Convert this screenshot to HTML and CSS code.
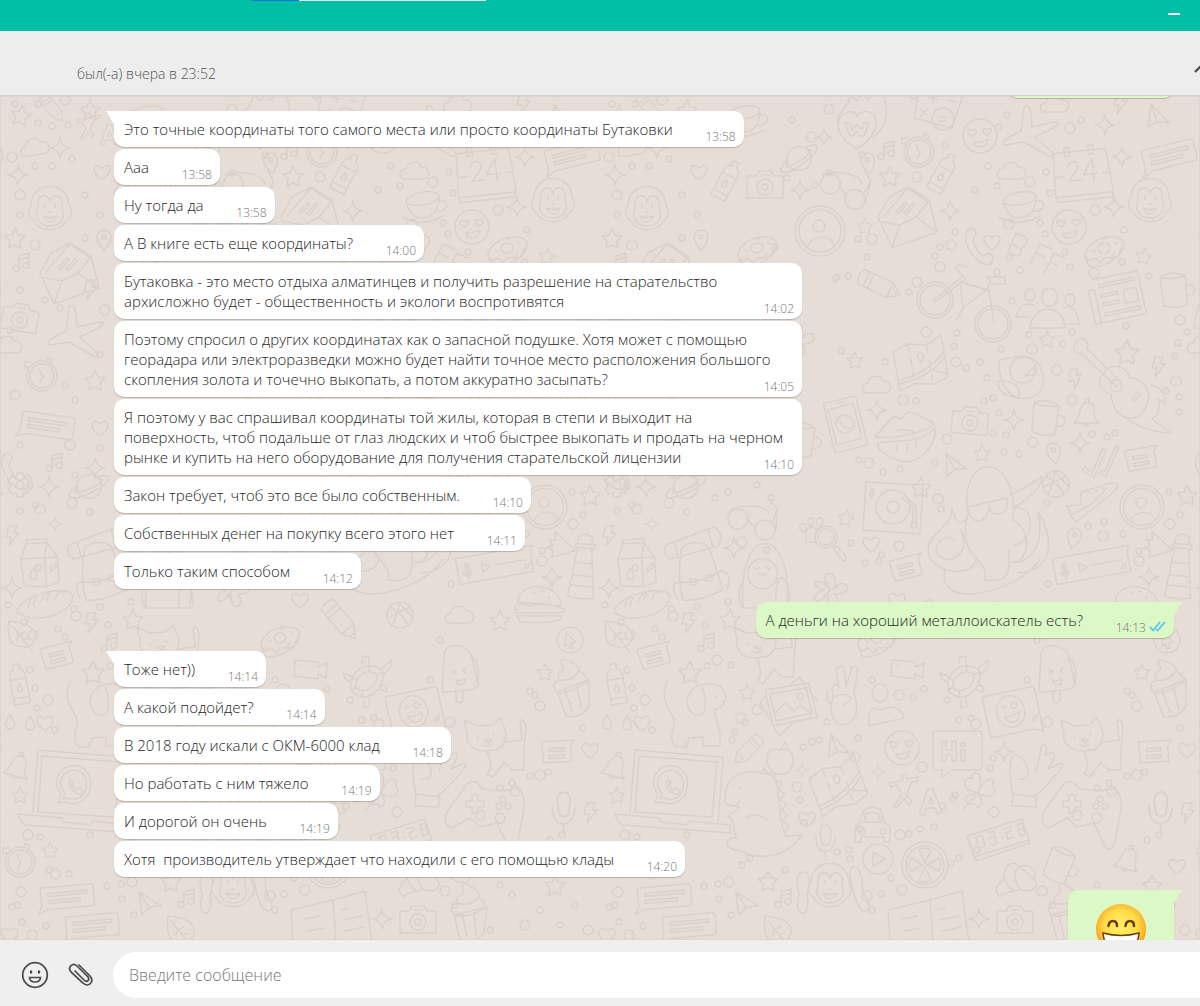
FILE: index.html
```
<!DOCTYPE html>
<html lang="ru">
<head>
    <meta charset="UTF-8">
    <meta name="viewport" content="width=device-width, initial-scale=1.0">
    <title>Чат</title>
    <link rel="stylesheet" href="styles.css">
</head>
<body>
    <div class="titlebar">
        <div class="progress"><span class="progress-done"></span></div>
        <button class="minimize" aria-label="Свернуть"></button>
    </div>

    <header class="chat-header">
        <span class="status">был(-а) вчера в 23:52</span>
        <button class="search" aria-label="Поиск">
            <svg width="24" height="24" viewBox="0 0 24 24"><path d="M1 17 8 10"/><circle cx="14" cy="5" r="7"/></svg>
        </button>
    </header>

    <main class="chat">
        <svg class="wallpaper" aria-hidden="true">
            <defs>
                <path id="star" d="M0-10 3-3 10-2 5 3 6 10 0 7-6 10-5 3-10-2-3-3Z"/>
                <path id="spark" d="M0-10Q1-1 10 0 1 1 0 10-1 1-10 0-1-1 0-10Z"/>
                <path id="heart" d="M0 8C-14-2-7-11 0-4 7-11 14-2 0 8Z"/>
                <path id="bolt" d="M-3-10H5L2-3H7L-3 10-1 1H-6Z"/>
                <path id="cloud" d="M-10 8C-17 7-16-1-9-2-8-10 4-11 6-4 15-5 17 7 8 8Z"/>
                <path id="pin" d="M0 11C-5 4-7 1-7-3A7 7 0 0 1 7-3C7 1 5 4 0 11ZM2-3A2 2 0 1 1-2-3 2 2 0 0 1 2-3Z"/>
                <path id="drop" d="M0-7Q9 6 0 7-9 6 0-7Z"/>
                <path id="music" d="M-3 6V-6L7-9V3M-3-2 7-5M-3 6A3 3 0 1 1-9 7 3 3 0 0 1-3 6ZM7 3A3 3 0 1 1 1 4 3 3 0 0 1 7 3Z"/>
                <path id="plane" d="M-12-9 13-2 2 3-3 12ZM2 3-12-9"/>
                <path id="smiley" d="M17 0A17 17 0 1 1-17 0 17 17 0 0 1 17 0ZM-8 0C-17-5-9-9-7-5-5-9 0-4-8 0ZM7-1C-1-6 5-10 7-6 10-10 15-5 7-1ZM-6 6Q2 7 8 3 7 11 0 11-5 11-6 6Z"/>
                <path id="clock" d="M15 0A15 15 0 1 1-15 0 15 15 0 0 1 15 0ZM12 0A12 12 0 1 1-12 0 12 12 0 0 1 12 0ZM-3-7 1 1-2 6M4-15 5-19 10-16 8-12M-12-9-17-8-17-14-11-14"/>
                <path id="bottle" d="M-8 20V-8Q-7-14-3-15V-20H3V-15Q7-14 8-8V20ZM-8-5H8M-8 14H8M0 0Q5 8 0 8-5 8 0 0Z"/>
                <path id="avatar" d="M25 0A25 25 0 1 1-25 0 25 25 0 0 1 25 0ZM21 0A21 21 0 1 1-21 0 21 21 0 0 1 21 0ZM5-5A6 6 0 1 1-7-5 6 6 0 0 1 5-5ZM-13 16C-8 3 10 3 15 15"/>
                <path id="note" d="M-16-10H17L13-5V11H-15ZM-9-3H6V0H-9ZM-9 4H6V7H-9Z"/>
                <path id="chat" d="M-24-11H26Q29-11 29-8V8Q29 11 26 11H-17L-28 15-24 8ZM-17-5H22V-2H-17ZM-17 2H15V5H-17Z"/>
                <path id="sticker" d="M-27-22H22Q26-22 26-18V24L17 20H-23Q-27 20-27 16ZM12-2A14 16 0 1 1-16-2 14 16 0 0 1 12-2ZM-9 2Q-2 4 6 0 6 8-1 9-7 9-9 2ZM-10-7-5-8M5-9A3 3 0 1 1 4-10ZM17 12 20 7M20 12 23 7"/>
                <path id="calendar" d="M-26-19H24Q27-19 27-16L30 25H-28ZM-26 5-18 5M22 5H27M-15-24H-10V-15H-15ZM9-24H14V-15H9ZM-28 25-26 30H29V25M-14-3C-12-12 0-11-3-2L-13 10H0M12 12V-10L2 5H16"/>
                <path id="airplane" d="M-6-28C-1-32 2-25 2-8L25-13C32-13 30-9 4 2L22 17Q25 21 20 22L-6 7-25 10Q-29 8-24 4L-9-4Z"/>
                <path id="planet" d="M-12-1A12 12 0 1 1 12 2 12 12 0 0 1-12-1ZM-12 0C-30 13-15 16 5 5 25-5 23-14 9-9M-12 2Q-20 12 5 1 18-7 10-7"/>
                <path id="glasses" d="M-7 5A10 10 0 1 1-27 5 10 10 0 0 1-7 5ZM20 16A10 10 0 1 1 0 16 10 10 0 0 1 20 16ZM-9 5 0 13M-26-2Q-24-8 0-8 12-6 14-1M18 8 22-5 14-15M22-5 21 16"/>
                <path id="letter" d="M-30 5-19-15 0-25 21-12 29 20-16 36ZM-30 9-8 13 8 5 29 20M-16 36-8 13M-24 4 0-24 20-10 8 5M-12 0-3-10-1-8-10 2ZM-4 1 5-9 7-7-2 3Z"/>
                <path id="cup" d="M-20-4C-18-14 12-19 13-9 13 6 5 12-5 12-12 12-18 4-20-4ZM-18-2C-5 2 12-4 13-9M13-5C25-7 22 7 11 5M-24 11Q-5 22 17 10"/>
                <path id="handset" d="M-12-16C-9-20-4-19-3-15L-6-6Q-2 6 4 9L10 6Q17 9 12 17C-2 21-18-3-12-16Z"/>
                <path id="donut" d="M-19 6C-20-8 8-20 19-9 26 3-3 21-15 16ZM6-3A6 5 0 1 1-6-1 6 5 0 0 1 6-3ZM-12 0-9 2M10-8 13-6M0-11 3-12M8 5 11 3M-19 6-15 11-9 8-4 13 0 8 14 7 18-4"/>
                <path id="bff" d="M-19-17-27 1Q-14 12-14-1-5-8-10-13ZM-14-1-22-6M-5 14 5-6 17-1M1 3 9 7M9 23 19 3 30 8M15 12 23 16"/>
                <path id="monkey" d="M-19-4C-19-30 19-30 19-4A6 8 0 0 1 17 10C10 23-10 23-17 10A6 8 0 0 1-19-4ZM-12-2C-15-16-1-18 0-8 1-18 15-16 12-2 17 10 8 16 0 16-8 16-17 10-12-2ZM-5-6V-3M5-6V-3M-7 6Q0 9 7 6 4 12 0 12-4 12-7 6ZM-1 2H1"/>
                <path id="arms" d="M-24-15Q-33-16-33-5L-31 8Q-35 26-27 26-20 25-23 8-18-10-24-15ZM22-20Q29-22 32-8L33 5Q43 21 36 24 28 24 24 6 17-15 22-20Z"/>
                <path id="bike" d="M-12-6A18 18 0 1 1-48-6 18 18 0 0 1-12-6ZM-15-6A15 15 0 1 1-45-6 15 15 0 0 1-15-6ZM46 18A18 18 0 1 1 10 18 18 18 0 0 1 46 18ZM43 18A15 15 0 1 1 13 18 15 15 0 0 1 43 18ZM-31-6-2-30 1-27-30-4ZM-5-24-2 2 21-16ZM-5-24 24-16 29 17M21-16 26-24M-2 2-9 14M22-29H40V-22H28ZM-2-30-10-38Q-5-44 3-38"/>
                <path id="pencil" d="M-20-8H12L24 0 12 8H-20Q-24 0-20-8ZM-14-8V8M-9-8V8M12-8V8M19-3V3"/>
                <path id="people" d="M-20 20C-18-5 14-5 15 20ZM7-14A8 9 0 1 1-8-14 8 9 0 0 1 7-14ZM-15-13A5 6 0 1 1-25-13 5 6 0 0 1-15-13ZM25-8A5 6 0 1 1 15-8 5 6 0 0 1 25-8ZM-22 9H-34Q-30-7-16-3M19 16H29Q27-4 14 0"/>
                <path id="paper" d="M-22-20H24V24H-28V-10H-22V24M-17-14H19V-11H-17ZM-17-4H0V-1H-17ZM-17 5H0V8H-17ZM6-4H19V10H6ZM-17 15H19V18H-17Z"/>
                <path id="map" d="M-26-19-10-24 8-20 24-27V15L8 20-10 16-26 21ZM-10-22V-16M-10-10V-3M-10 4V10M8-20V-12M8-4V3M8 10V16M-26 10Q5 8 24-10M-26 14Q8 12 24-5M8 5 24 12M0-4C-10-16 10-16 0-4Z"/>
                <path id="bird" d="M-23-18C-8-21-4-22 2-22 24-20 30 16 6 20-10 24-24 8-23-18ZM14-8A13 13 0 1 1-12-8 13 13 0 0 1 14-8ZM3-2 13-12V-3ZM-24 3C-5 2 0 12-4 20-18 18-24 14-24 3Z"/>
                <path id="guitar" d="M-20-12C-12-24 3-18 5-8 28-2 30 14 16 30 1 39-11 28-13 10-25 4-28-5-20-12ZM-2 2A6 6 0 1 1-3-3ZM-7 2-42-31M-3-3-37-36M-42-31C-55-31-50-47-42-46-35-45-36-39-37-36M27 0Q41 3 42 20L34 13Q38 28 28 34L47 48Q20 47 4 34M8 14 14 7 17 9 10 16Z"/>
                <path id="phone" d="M-16-25H14Q17-25 17-22V23Q17 26 14 26H-14Q-17 26-17 23ZM-13-18H13V18H-13ZM9 0A9 9 0 1 1-9 0 9 9 0 0 1 9 0ZM-4-4Q-4 4 4 5M-3-22H3M-1 22H1"/>
                <path id="lips" d="M-30 2C-12-19-12-21-3-16 4-28 7-23 29-12 30-7 12-2 0 0-10 4-20 2-30 2ZM-27 8C0 5 15 8 30-7 32 8 18 25 2 27-10 26-30 16-27 8ZM-8-4Q0-7 9-3M-8 10V15M2 9V16M11 6V13"/>
                <path id="camera" d="M-16-9H-9L-6-14H6L9-9H16Q18-9 18-7V13H-18V-7Q-18-9-16-9ZM8 2A8 8 0 1 1-8 2 8 8 0 0 1 8 2ZM3 2A3 3 0 1 1-3 2 3 3 0 0 1 3 2ZM-3-10H4"/>
                <path id="mug" d="M-12-15Q0-10 13-12L9 16Q-2 20-14 13ZM-12-15Q0-21 13-12M12-3C24-2 20 10 10 8"/>
                <path id="bell" d="M-12 9Q-7 5-6-4C-4-14 8-14 8-4Q8 6 13 9ZM-3 9Q0 14 4 9M-1-11V-15H3V-11"/>
                <path id="ticks" d="M-18 8-15 5-8 11 3-14 6-12-6 16ZM2 8-1 11 6 14 19-15 16-17 5 9Z"/>
                <path id="octopus" d="M-22-5C-33-70 30-70 23 0 44 10 38 45 22 42 35 45 56 30 48-8 62 13 68 50 28 53M-22-5C-28 10-36 0-38-12-39 10-60 10-62 30-61 52-20 60-14 40M-22-5C-35 38 0 38-5 60 30 65 15 35 20 30M24-13Q50-27 52-43 35-32 20-25M25-12C48-15 42 22 25 25M-22-13 17-22Q20-8 8-6-1-6 0-15-3 2-13 1-22-2-22-13ZM-36 20C-50 10-66 37-40 40-25 35-23 20-30 10M-45 50C-55 90 25 75 50 40"/>
                <path id="ball" d="M13 0A13 13 0 1 1-13 0 13 13 0 0 1 13 0ZM-10-8Q3 0 8 10M-12 3Q0-3 10-8M-2-13Q6-5 13 3M-8 10Q-2 0-1-12"/>
                <path id="shoe" d="M-25 0-12-1Q-10-10-12-13L18-23Q30-24 22-14L-16 16Q-22 10-25 0ZM-19 8-2-1 15-18M-3-14-1-12M4-16 6-14M10-18 12-16"/>
                <path id="turntable" d="M-27-25 30-22 27 27-30 23ZM17 0A17 17 0 1 1-17 0 17 17 0 0 1 17 0ZM6 0A6 6 0 1 1-6 0 6 6 0 0 1 6 0ZM9-9 20 0V17M12-12 23 0V17M24 18A3 3 0 1 1 18 18 3 3 0 0 1 24 18ZM-23-14-20-18-19-14-22-9Z"/>
                <path id="voice" d="M-38-13H40L37-7V13H-38ZM-13-4V5L-5 1ZM0 0H30M-28-5V3M-30-5V3Q-28 6-26 3V-5Q-28-8-30-5ZM-33 2Q-28 11-24 2M-28 7V10M28 9 31 4M31 9 34 4"/>
                <path id="lighthouse" d="M-7-20H7L13 29Q0 33-13 29ZM-9-20H10V-24H-9ZM-7-24V-31Q0-37 7-31V-24M-9-5H9M-10 8H10M-12 18H12M-9-17-31-34-30-25-36-26-32-20-38-17-31-15-32-8Z"/>
                <path id="gear" d="M-3-12H3L4-8 8-10 12-5 9-2 12 3 8 8 4 7 3 12H-3L-4 8-8 9-12 4-9 1-12-4-8-9-4-7ZM4 0A4 4 0 1 1-4 0 4 4 0 0 1 4 0Z"/>
                <path id="milk" d="M-20-5-14-20H7L17-5V20L4 24-18 22ZM-20-5H4L7-20M4-5V24M4-5 17-5M-14-20V-24H7V-20M-8 5Q-1 15-8 16-15 15-8 5ZM9 5 15 1V5L9 9Z"/>
                <path id="backpack" d="M-17-20C-13-30 8-30 12-20L25 20Q0 32-15 30-21 10-17-20ZM-32-25 16-43Q27-35 20-24L-27-11Q-36-15-32-25ZM-20 12Q0 15 25 0M-8 9H-2V15H-8ZM8 5H14V11H8ZM-18 12Q-29 12-21 28M23 2Q35 2 29 19M-24-28-20-14M10-40 15-23"/>
                <path id="bread" d="M-28 9C-29-5 10-18 24-12 36-5 17 16-15 14ZM-17 3Q-14-10-9-6-13 2-11 1M-4-2Q0-13 5-10 0-2 2-4M10-5Q14-15 19-11"/>
                <path id="leaf" d="M-12-14C18-11 19 2 8 12-11 13-14 7-12-14ZM-9-9 12 17M-3 0 4-3M2 5 8 3M-3 0-4 6"/>
                <path id="burger" d="M-22-2C-20-26 22-20 21 2ZM-25 2Q-20-2-10 2 5-3 20 4 28 5 22 9H-24ZM-23 12H22Q20 21-20 18ZM-7-12-5-11M2-13 4-12M8-7 10-6"/>
                <path id="cursor" d="M13 0A13 13 0 1 1-13 0 13 13 0 0 1 13 0ZM-4-7 6 2 1 3 3 8 0 9-2 4-5 6Z"/>
                <path id="sloth" d="M-20 30C-26-60 32-52 24 30ZM14-8A15 15 0 1 1-15-8 15 15 0 0 1 14-8ZM-9-11Q-6-7-4-11M3-11Q6-7 8-11M-4-5Q0-1 3-5M13 30Q12-3 20 0 26 5 27 28M-20 2Q-28 20-20 30"/>
                <path id="magnifier" d="M12 0A11 11 0 1 1-10 0 11 11 0 0 1 12 0ZM9 0A8 8 0 1 1-7 0 8 8 0 0 1 9 0ZM8 11 18 24Q22 24 21 20L12 9ZM-10 5H-19V-6Q-15-13-8-8M-20-12A3 4 0 1 1-21-13ZM-12-18A3 4 0 1 1-13-19ZM-3-18A3 4 0 1 1-4-19Z"/>
                <path id="flower" d="M-3-3C-12-20 10-22 4-3 19-14 24 5 5 4 15 18-4 22-2 4-16 20-22 5-6 0-22-4-13-16-3-3ZM0 0 8-3M0 0-6 6M0 0-3-8"/>
                <path id="dog" d="M-30-34C-40-10-20-5-23 10-30 30-20 34-10 30L-8 22 6 21V30H23V18L17-6C39-13 26-36 10-32-10-33-17-7-1-1 12 2 9-20 5-29M-10 30-12 26M25-15H27M18-19H20"/>
                <path id="gallery" d="M-24-17 20-24 28 10-16 19ZM-19-13 17-19 23 6-13 14ZM-15 7-4-4 5 4 11-1 23 6M14-11A3 3 0 1 1 13-13ZM-24-10-29-5-10 29 5 15M0-21 10-30 29-5"/>
                <path id="peace" d="M-12-3-13-13Q-8-18-6-12L-9-31Q-3-37-1-31L1-13 7-33Q12-36 13-30L9-8Q18 24-4 25-18 20-12-3ZM-12-3Q5-9 6 0L-3 6M-17-9Q-21 0-13 5"/>
                <path id="person" d="M8-14A8 9 0 1 1-8-14 8 9 0 0 1 8-14ZM-11 19C-13-2-5 0 0 3 14-4 22 3 24 11Z"/>
                <path id="video" d="M-15-9 8-7V-2L17-6 16 9 8 5V10L-16 7ZM-10-3H-9"/>
                <path id="turtle" d="M-14 8C-17-15 8-23 18-10 20 10-2 24-14 8ZM-9 5C-10-8 5-14 12-7 13 5-3 14-9 5ZM-14 8-9 5M18-10 12-7M-4 15-2 9M5-17 4-11M-14-4-9-3M-3-19-2-26 4-25 4-18M16-13 26-22 26-15 18-7M-14-6-22-9-20-3-15 0M-1 18-1 26 5 24 4 16M14 7 21 10 22 5 17 3"/>
                <path id="icecream" d="M-18 14-16-23C-15-38 10-34 12-20L18 7Q17 13-18 14ZM-4 13V23Q0 27 3 22V12M12-20Q20-18 18 7M-8-8-4-6-8-4M6-10 3-7 6-5M-4 2Q0 4 5 0 5 7 0 7-4 6-4 2Z"/>
                <path id="cupcake" d="M-16 0-10 25Q4 30 14 18L17-8ZM-16 0C-22-8-16-10-13-12-14-20-9-20-6-22Q-10-30-6-32C10-25 10-20 8-18 15-15 12-11 17-8 5 0-10 3-16 0ZM-13-12Q0-8 8-18M-8-1-3 22M4-2 6 20"/>
                <path id="cat" d="M-25-15-28-28-15-22 0-23 8-30 13-19C17-3 5 3 0 2-15 6-27-3-25-15ZM-5 3Q2 20-5 26L1 29 12 14 20 22 32 22C29 0 40-30 28-28L30-8 14-6M-15-11-14-9M1-14 2-12M-8-8 0-9-3-5ZM-10-4Q-4 0 0-4"/>
                <path id="hi" d="M-22-22H22Q25-22 25-19V14Q25 17 22 17H-5L-15 25V17H-22Q-24 17-24 14V-19Q-24-22-22-22ZM-15-12H-11V-3H-5V-12H-1V8H-5V2H-11V8H-15ZM4-3H8V8H4ZM4-10H8V-7H4Z"/>
                <path id="okhand" d="M-19 16C-24-8-23-32-12-22-2-15 0 3-13 0M4-7 10-34Q15-38 14-24L21-27Q25-24 16-10L29-16Q34-14 22-2 10 12 2 17M-19 15 4 18V28L-20 27Z"/>
                <path id="gamepad" d="M-42-5-23-31Q-15-38-8-26L15-24 26-27Q36-22 34-6L27 31Q20 39 15 25L7 8-10 12-20 3-38 13Q-49 9-42-5ZM-18-20H-12V-14H-6V-8H-12V-2H-18V-8H-24V-14H-18ZM12-9A3 3 0 1 1 11-11ZM21-9A3 3 0 1 1 20-11ZM16-16A3 3 0 1 1 15-18ZM-5 0A5 5 0 1 1-6-3ZM15 3A5 5 0 1 1 14 0Z"/>
                <path id="laptop" d="M-43 22-38-40 48-33Q50-33 50-30L45 32M-38 22-34-34 44-28 39 27ZM-58 24-14 28-12 32 14 35 16 31 57 35V43L-50 35Q-56 32-58 24ZM14-3A17 17 0 0 1-10 12L-18 13-15 4A17 17 0 1 1 14-3ZM10-3A13 13 0 0 1-9 8L-13 9-11 3A13 13 0 1 1 10-3ZM-6-10Q-9 1 5 5L7 1 3-2 0 0-4-5-2-8Z"/>
                <path id="dino" d="M-37-5C-40-40-5-40 10-32 20-25 14 10 24 28L40 27C20 55-10 50-23 42-40 42-38 28-25 30-32 20-24 14-34 8L-22 0ZM-37-5Q-27 3-22-8M-15 10Q-8 3 6 12M-29-22H-28M-23-20H-22M-1-34 2-40 6-34 12-36 13-28 20-25 17-18 23-14 18-8 24-4 20 2 25 7 21 13 27 18 24 24"/>
                <path id="apple" d="M0-8C17-14 17 13 4 16H-4C-17 10-17-14 0-8ZM0-8 5-16 7-12"/>
                <path id="car" d="M-17 17V2L-12-3-8-15Q0-20 9-15L12-3 18 2V17H12V12H-11V17ZM-10-3H11M-8-3-6-11Q0-14 7-11L9-3M-7 6A3 3 0 1 1-8 4ZM14 6A3 3 0 1 1 13 4Z"/>
                <path id="translate" d="M-25-15-12-18-13-23-9-24-8-19 3-21 3-17-3-16-9-3-3 4-6 7-11 0-18 10-21 8-13-4-19-13-24-11ZM4 16 13-9H18L27 14 22 16 20 10H11L9 17ZM13 5H18L16-1Z"/>
                <path id="clover" d="M0 0C-20-5-14-17-6-15-6-25 8-22 0 0 8-20 20-14 14-8 22 0 12 8 0 0 8 12 0 18-3 11-12 14-20 2 0 0ZM-2 3-15 16"/>
                <path id="mic" d="M-5-8Q-4-15 1-15 6-14 6-8L5 3Q2 7-3 4ZM-9-3C-10 16 10 16 10-2M0 11 1 19"/>
                <path id="digital" d="M-30-4 25-21 32 0-23 17ZM-22 16-21 21 33 3 32 0M-21-3-15-5-12 6-18 8ZM-9-7-3-9-2-4-8-2M-2-4 0 3-5 5M3-8V-7M5-3V-2M7-11 13-13 14-9 9-7 11-1 17-3M20-15 25-17 28-6 23-4ZM21-10 27-12"/>
                <path id="play" d="M15 0A15 15 0 1 1-15 0 15 15 0 0 1 15 0ZM-5-7 7 0-5 7Z"/>
                <path id="orange" d="M23 0A23 23 0 1 1-23 0 23 23 0 0 1 23 0ZM19 0A19 19 0 1 1-19 0 19 19 0 0 1 19 0ZM0-2-6-15Q0-19 6-15ZM2 0 14-7Q18 0 14 6ZM0 2 6 15Q0 19-6 15ZM-2 0-14 6Q-18 0-14-7Z"/>
                <path id="croissant" d="M-18 17C-27 8-17 3-14-2-15-15-5-20 1-14 15-17 20-6 16-1 23 8 11 14 2 9-4 14-12 9-18 17ZM-14-2Q-12 6-4 11M1-14Q-8-4 2 9M16-1 1-14"/>
                <path id="book" d="M-42-25 0-35 32-44 42 30-38 35ZM0-35 5 33M8-25 15-27M-28-16-13-19M-25-4-10-7M10-15 29-19M12-4 31-8M14 7 30 4M-18 5-15 11-9 11-13 16-12 22-18 19-24 22-23 16-27 11-21 11Z"/>
                <path id="w" d="M-19-4C-17-22 0-18 0-13 5-20 20-20 19-4Q15 12 0 20-18 10-19-4ZM-19-5C-21-20-8-18-7-34L0-28 8-39Q7-32 10-29L22-41C35-20 30 0 15 8M-12-6H-7L-5 1 0-5 5 1 7-6H12L7 7H3L0 2-4 7H-7Z"/>
                <path id="calc" d="M-20-24 20-17Q23-16 22-12L12 18-26 8ZM14 9A11 11 0 1 1-8 9 11 11 0 0 1 14 9ZM-1 7H7M-1 11H7M-11-13-3-11M-8-16-6-8M8-10 15-8M-19 0-13 5M-13-1-19 6"/>
                <circle id="dot" r="3"/>
                <circle id="ring" r="5"/>
                <pattern id="doodles" width="597" height="1000" patternUnits="userSpaceOnUse">
                    <g id="tile" transform="translate(0 -96)"></g>
                </pattern>
            </defs>
            <rect width="100%" height="100%" fill="url(#doodles)"/>
        </svg>

        <div class="messages">
            <div class="group out">
                <div class="bubble previous"></div>
            </div>
            <div class="group in">
                <div class="bubble tail"><p>Это точные координаты того самого места или просто координаты Бутаковки</p><time>13:58</time></div>
                <div class="bubble"><p>Ааа</p><time>13:58</time></div>
                <div class="bubble"><p>Ну тогда да</p><time>13:58</time></div>
                <div class="bubble"><p>А В книге есть еще координаты?</p><time>14:00</time></div>
                <div class="bubble long"><p>Бутаковка - это место отдыха алматинцев и получить разрешение на старательство<br>архисложно будет - общественность и экологи воспротивятся</p><time>14:02</time></div>
                <div class="bubble long"><p>Поэтому спросил о других координатах как о запасной подушке. Хотя может с помощью<br>георадара или электроразведки можно будет найти точное место расположения большого<br>скопления золота и точечно выкопать, а потом аккуратно засыпать?</p><time>14:05</time></div>
                <div class="bubble long"><p>Я поэтому у вас спрашивал координаты той жилы, которая в степи и выходит на<br>поверхность, чтоб подальше от глаз людских и чтоб быстрее выкопать и продать на черном<br>рынке и купить на него оборудование для получения старательской лицензии</p><time>14:10</time></div>
                <div class="bubble"><p>Закон требует, чтоб это все было собственным.</p><time>14:10</time></div>
                <div class="bubble"><p>Собственных денег на покупку всего этого нет</p><time>14:11</time></div>
                <div class="bubble"><p>Только таким способом</p><time>14:12</time></div>
            </div>
            <div class="group out">
                <div class="bubble tail">
                    <p>А деньги на хороший металлоискатель есть?</p>
                    <time>14:13 <svg class="read" width="17" height="11" viewBox="0 0 17 11"><path d="M1 6 4 9.500 11 1M7 8 8.500 9.500 16 1"/></svg></time>
                </div>
            </div>
            <div class="group in">
                <div class="bubble tail"><p>Тоже нет))</p><time>14:14</time></div>
                <div class="bubble"><p>А какой подойдет?</p><time>14:14</time></div>
                <div class="bubble"><p>В 2018 году искали с ОКМ-6000 клад</p><time>14:18</time></div>
                <div class="bubble"><p>Но работать с ним тяжело</p><time>14:19</time></div>
                <div class="bubble"><p>И дорогой он очень</p><time>14:19</time></div>
                <div class="bubble"><p>Хотя&nbsp; производитель утверждает что находили с его помощью клады</p><time>14:20</time></div>
            </div>
            <div class="group out">
                <div class="bubble tail emoji">
                    <svg width="50" height="50" viewBox="0 0 50 50" role="img" aria-label="Смеющийся смайлик">
                        <defs>
                            <radialGradient id="face" cx="50%" cy="45%" r="55%">
                                <stop offset="0" stop-color="#fff06a"/>
                                <stop offset="0.6" stop-color="#ffdc4a"/>
                                <stop offset="0.85" stop-color="#fdb52c"/>
                                <stop offset="1" stop-color="#f28a16"/>
                            </radialGradient>
                        </defs>
                        <circle cx="25" cy="25" r="25" fill="url(#face)"/>
                        <path d="M12.500 22Q13 17 17 17T21 22M29.500 22Q30 17 34 17T38 22" fill="none" stroke="#6b3f0c" stroke-width="2.500" stroke-linecap="round"/>
                        <path d="M7 29Q25 34 43 29C42 42 35 46 25 46S8 42 7 29Z" fill="#fff" stroke="#6b3f0c" stroke-width="1.500"/>
                        <path d="M8 36Q25 40 42 36" fill="none" stroke="#b9b9b9"/>
                    </svg>
                </div>
            </div>
        </div>
    </main>

    <footer class="composer">
        <button class="icon" aria-label="Эмодзи">
            <svg width="28" height="28" viewBox="0 0 28 28">
                <circle cx="14" cy="14" r="12.300"/>
                <path d="M8.500 16.500H19.500C19 22.500 9 22.500 8.500 16.500Z"/>
                <ellipse class="solid" cx="10" cy="11" rx="1.300" ry="1.800"/>
                <ellipse class="solid" cx="18" cy="11" rx="1.300" ry="1.800"/>
            </svg>
        </button>
        <button class="icon" aria-label="Прикрепить">
            <svg width="28" height="28" viewBox="0 0 28 28">
                <path d="M12 4 23 15C28 21 21 27 16 22L4 11C0 6 6 1 10 5L21 16C23 19 20 22 17 19L8 10"/>
            </svg>
        </button>
        <input class="message-input" type="text" placeholder="Введите сообщение" aria-label="Введите сообщение">
    </footer>

    <script src="wallpaper.js"></script>
</body>
</html>
```
FILE: styles.css
```
* {
    box-sizing: border-box;
}

body {
    font-family: "Open Sans", "Noto Sans", sans-serif;
    font-weight: 360;
    background-color: #ededed;
    color: #262626;
    margin: 0;
    height: 100vh;
    display: flex;
    flex-direction: column;
    overflow: hidden;
}

button {
    background: none;
    border: none;
    padding: 0;
    cursor: pointer;
}

.titlebar {
    flex: none;
    height: 31px;
    background: #00bfa5;
    display: flex;
    justify-content: space-between;
    align-items: flex-start;
    padding: 0 20px 0 252px;
}

.progress {
    width: 234px;
    height: 1px;
    background: #e0e8e4;
}

.progress-done {
    display: block;
    width: 20%;
    height: 1px;
    background: #0a78d7;
}

.minimize {
    width: 12px;
    height: 15px;
    border-bottom: 2px solid #fff;
}

.chat-header {
    flex: none;
    height: 65px;
    display: flex;
    justify-content: space-between;
    align-items: flex-end;
    padding: 0 0 11px 77px;
    border-bottom: 1px solid #d6cfca;
    overflow: hidden;
}

.status {
    font-size: 14px;
    font-weight: 300;
    line-height: 20px;
    color: #555;
}

.search {
    height: 32px;
    margin-right: -18px;
}

.search svg {
    fill: none;
    stroke: #444;
    stroke-width: 2;
}

.chat {
    flex: 1;
    min-height: 0;
    position: relative;
    overflow: hidden;
    background: #e5ddd6;
}

.wallpaper {
    position: absolute;
    width: 100%;
    height: 100%;
    fill: none;
    stroke: #dbd1c9;
    stroke-width: 1.5;
    stroke-linejoin: round;
    stroke-linecap: round;
}

.messages {
    position: relative;
    display: flex;
    flex-direction: column;
    gap: 13px;
    padding: 0 26px 0 114px;
}

.group {
    display: flex;
    flex-direction: column;
    align-items: flex-start;
    gap: 2px;
}

.out {
    align-items: flex-end;
}

.bubble {
    position: relative;
    display: grid;
    max-width: 688px;
    padding: 8px 8px 8px 10px;
    background: #fff;
    border-radius: 10px;
    box-shadow: 0 1px 1px rgba(0, 0, 0, 0.2);
}

.out .bubble {
    background: #dcf8c6;
}

.bubble p {
    grid-area: 1 / 1;
    margin: 0;
    padding-right: 63px;
    font-size: 15px;
    line-height: 20px;
    white-space: nowrap;
}

.bubble time {
    grid-area: 1 / 1;
    place-self: end;
    margin-bottom: -6px;
    font-size: 12px;
    font-weight: 300;
    line-height: 16px;
    color: #777;
}

.long {
    width: 100%;
}

.long p {
    padding-right: 0;
}

.out p {
    padding-right: 83px;
}

/* little triangle beside the first bubble of a group */
.tail::before {
    content: "";
    position: absolute;
    top: 0;
    left: -8px;
    width: 18px;
    height: 13px;
    background: inherit;
    clip-path: polygon(0 0, 100% 0, 100% 100%, 8px 100%);
}

.out .tail::before {
    left: auto;
    right: -8px;
    clip-path: polygon(0 0, 100% 0, 10px 100%, 0 100%);
}

.previous {
    width: 166px;
    height: 36px;
    margin-top: -34px;
}

.read {
    fill: none;
    stroke: #4fc3f7;
    stroke-width: 1.6;
}

.emoji {
    padding: 14px 28px 40px;
}

.composer {
    flex: none;
    height: 66px;
    display: flex;
    align-items: center;
    gap: 18px;
    padding: 3px 0 0 21px;
    background: #efefef;
}

.icon {
    flex: none;
    width: 28px;
    height: 28px;
}

.icon svg {
    display: block;
    fill: none;
    stroke: #4a4a4a;
    stroke-width: 1.7;
    stroke-linecap: round;
}

.icon .solid {
    fill: #4a4a4a;
    stroke: none;
}

.message-input {
    flex: 1;
    min-width: 0;
    height: 46px;
    padding: 0 16px;
    border: none;
    border-radius: 23px 0 0 23px;
    background: #fff;
    font: 300 16px "Open Sans", "Noto Sans", sans-serif;
    outline: none;
}

.message-input::placeholder {
    color: #777;
}
```
FILE: wallpaper.js
```
// name, x, y, rotation, scale
const doodles = [
    ['w', 260, 129], ['calc', 343, 110], ['smiley', 383, 136], ['airplane', 433, 135], ['calendar', 484, 170, -6],
    ['cloud', 415, 171], ['planet', 202, 158, -10], ['glasses', 251, 182, 10], ['music', 290, 150], ['pin', 271, 163, -10],
    ['clock', 322, 152], ['bottle', 346, 173, 28], ['avatar', 223, 231], ['letter', 311, 212], ['cup', 426, 206],
    ['handset', 382, 247], ['heart', 395, 242], ['bff', 438, 250], ['smiley', 472, 227], ['donut', 507, 250],
    ['chat', 570, 156, -14], ['monkey', 553, 202], ['plane', 560, 118, 30], ['cloud', 458, 104], ['bolt', 523, 104],
    ['star', 293, 176], ['star', 268, 226, 0, 0.8], ['star', 547, 256, 10, 0.8], ['spark', 508, 125], ['spark', 525, 157],
    ['spark', 227, 137, 0, 0.8], ['spark', 203, 190], ['spark', 353, 211], ['spark', 517, 207],
    ['star', 21, 115, 10], ['pencil', 52, 108, 50, 0.7], ['translate', 97, 132, 0, 0.8], ['heart', 102, 172], ['cloud', 35, 147, -10],
    ['spark', 60, 148], ['spark', 18, 175], ['monkey', 50, 210], ['bottle', 130, 180, 28], ['star', 90, 110], ['cup', 150, 120],
    ['camera', 168, 185], ['star', 15, 238], ['letter', 70, 268], ['music', 22, 262], ['pin', 104, 240], ['donut', 160, 250],
    ['bike', 368, 306], ['pencil', 282, 285, 25], ['people', 453, 308], ['paper', 521, 295, -12], ['mug', 578, 290, -12],
    ['map', 325, 366, -10], ['bird', 425, 378], ['guitar', 527, 385], ['cloud', 280, 385], ['phone', 248, 424, -14],
    ['lips', 308, 435], ['camera', 373, 421, 5], ['mug', 449, 418], ['bell', 489, 414], ['pin', 457, 453, -10],
    ['ticks', 503, 462], ['note', 545, 458, -10], ['octopus', 393, 520], ['ball', 459, 484], ['shoe', 495, 506],
    ['avatar', 545, 507, 0, 0.88], ['turntable', 296, 507], ['plane', 357, 466, 20], ['voice', 495, 565, -10],
    ['star', 258, 360, 0, 0.8], ['star', 450, 339, 0, 0.8], ['star', 530, 352, 0, 1.2], ['bolt', 478, 379, -15], ['bolt', 561, 367],
    ['spark', 280, 410], ['spark', 417, 420], ['spark', 483, 443], ['star', 385, 453, 0, 0.8], ['star', 590, 495], ['star', 324, 487],
    ['star', 249, 518, 10, 0.8], ['heart', 274, 544], ['note', 310, 567, -15], ['pin', 477, 538, 15], ['spark', 552, 577],
    ['camera', 20, 318, 10], ['airplane', 75, 335], ['clock', 42, 376], ['star', 95, 380], ['chat', 45, 425, 8],
    ['heart', 100, 428], ['handset', 15, 472], ['music', 55, 462], ['spark', 95, 468], ['cloud', 8, 345], ['bolt', 90, 290],
    ['bell', 160, 350], ['flower', 200, 340], ['mug', 205, 440], ['smiley', 160, 440],
    ['gear', 20, 485], ['bolt', 12, 536], ['spark', 49, 487], ['planet', 89, 486], ['spark', 55, 524, 0, 0.7], ['milk', 41, 563, -3],
    ['backpack', 101, 570], ['bread', 45, 604], ['leaf', 21, 635], ['burger', 540, 604], ['cursor', 570, 640], ['sloth', 166, 578],
    ['glasses', 158, 514], ['magnifier', 228, 537], ['flower', 233, 590], ['note', 58, 655, -15], ['bolt', 91, 623], ['star', 133, 619],
    ['spark', 137, 548], ['lighthouse', 583, 568, 5], ['spark', 12, 588], ['music', 110, 642], ['cat', 165, 655], ['donut', 280, 640],
    ['pencil', 340, 620, 50], ['heart', 300, 600], ['cloud', 460, 615], ['star', 500, 620], ['ball', 400, 615],
    ['bottle', 19, 684, -10], ['dog', 100, 716], ['star', 93, 672, 0, 1.1], ['gallery', 192, 707], ['peace', 248, 700],
    ['person', 283, 707], ['video', 310, 669], ['turtle', 365, 682], ['icecream', 460, 678], ['sticker', 416, 713, -12],
    ['cupcake', 573, 690, -8], ['cat', 492, 748], ['hi', 360, 753], ['smiley', 305, 748], ['okhand', 435, 779], ['gamepad', 490, 815],
    ['laptop', 76, 790], ['dino', 165, 808], ['map', 243, 788, -20], ['apple', 183, 758], ['pencil', 151, 750, 135, 0.8],
    ['car', 275, 825], ['translate', 318, 798], ['clover', 381, 793], ['mic', 228, 840], ['mic', 563, 810, 0, 1.2], ['digital', 400, 840],
    ['play', 281, 859], ['orange', 328, 865], ['monkey', 233, 887], ['arms', 233, 887], ['croissant', 421, 880], ['mug', 463, 865, 15],
    ['chat', 65, 897, -5], ['chat', 90, 926, -5], ['star', 171, 881], ['plane', 148, 904, 15], ['book', 333, 935], ['camera', 418, 920],
    ['bell', 17, 767, 15], ['star', 20, 795, 0, 0.8], ['heart', 45, 723], ['drop', 10, 722], ['drop', 30, 723], ['heart', 210, 819],
    ['clock', 20, 862], ['star', 50, 850, 0, 0.8], ['star', 150, 692, 0, 0.8], ['heart', 590, 750], ['note', 558, 751, -3],
    ['bolt', 590, 813], ['bell', 530, 860, 15], ['star', 555, 885], ['heart', 580, 866], ['spark', 205, 770, 0, 0.7],
    ['spark', 281, 772, 0, 0.7], ['spark', 407, 752], ['spark', 382, 919], ['music', 187, 898], ['leaf', 180, 930],
    ['cupcake', 470, 915], ['heart', 10, 935], ['star', 545, 672, 0, 0.8], ['plane', 240, 748, 30]
];

// small circles that fill the space between the drawings
const dots = [
    [232, 109], [402, 127], [316, 96], [195, 120], [214, 137], [265, 155], [232, 173], [218, 185], [320, 177], [348, 145],
    [410, 115], [484, 120], [473, 128], [391, 166], [449, 172], [400, 186], [433, 182], [453, 193], [378, 190], [190, 178],
    [275, 239], [261, 239], [178, 247], [358, 232], [412, 224], [443, 223], [448, 234], [343, 247], [354, 245], [338, 256],
    [412, 257], [423, 270], [498, 210], [527, 230], [468, 252], [473, 267], [497, 273], [525, 262], [240, 277], [270, 257],
    [343, 267], [400, 272], [238, 279], [251, 276], [320, 282], [415, 301], [312, 292], [360, 333], [329, 332], [432, 335],
    [466, 344], [404, 349], [435, 349], [357, 346], [244, 351], [288, 362], [359, 362], [383, 362], [369, 368], [390, 378],
    [460, 370], [475, 332], [529, 326], [552, 276], [583, 320], [590, 332], [581, 343], [578, 356], [579, 381], [569, 391],
    [582, 397], [582, 412], [306, 400], [319, 401], [387, 401], [396, 398], [475, 400], [402, 413], [396, 433], [409, 435],
    [436, 442], [510, 437], [518, 433], [495, 434], [350, 439], [407, 452], [422, 454], [262, 460], [272, 463], [286, 472],
    [303, 469], [338, 463], [341, 499], [344, 509], [450, 503], [491, 526], [506, 536], [526, 534], [507, 522], [572, 492],
    [573, 524], [583, 515], [254, 543], [285, 555], [302, 546], [282, 561], [268, 563], [542, 551], [542, 561], [451, 584],
    [35, 505], [90, 512], [40, 509], [20, 511], [131, 492], [118, 498], [72, 503], [160, 485], [174, 498], [38, 568],
    [145, 542], [170, 550], [100, 607], [131, 602], [76, 616], [58, 629], [108, 625], [74, 609], [33, 635], [65, 637],
    [8, 605], [24, 622], [120, 660], [134, 665], [30, 670], [110, 666], [48, 700], [35, 688], [37, 708], [55, 730],
    [144, 718], [148, 722], [138, 732], [135, 740], [160, 710], [222, 740], [230, 722], [261, 738], [258, 757], [206, 747],
    [215, 742], [275, 680], [302, 695], [316, 697], [327, 689], [374, 718], [379, 724], [362, 720], [350, 700], [430, 680],
    [450, 722], [440, 640], [530, 691], [535, 695], [540, 706], [583, 728], [396, 758], [393, 768], [325, 767], [358, 795],
    [356, 799], [346, 806], [397, 812], [337, 827], [323, 829], [312, 834], [303, 835], [207, 823], [263, 829], [530, 776],
    [540, 775], [548, 772], [512, 783], [500, 788], [515, 791], [550, 840], [562, 835], [203, 800], [200, 787], [240, 852],
    [252, 850], [253, 859], [28, 835], [40, 837], [90, 835], [49, 870], [55, 874], [69, 874], [107, 886], [121, 884],
    [132, 882], [145, 865], [153, 858], [188, 870], [21, 892], [18, 905], [12, 907], [22, 922], [32, 935], [46, 926],
    [122, 899], [134, 915], [270, 896], [294, 878], [284, 894], [275, 910], [305, 890], [362, 858], [354, 863], [380, 850],
    [445, 891], [455, 905], [500, 885], [512, 895], [525, 925], [540, 910], [560, 925], [575, 905], [588, 930], [490, 930],
    [15, 104], [38, 104], [65, 100], [38, 123], [52, 126], [68, 125], [12, 157], [35, 166], [52, 166], [72, 159],
    [20, 195], [85, 195], [20, 215], [100, 215], [35, 245], [85, 238], [20, 290], [45, 300], [105, 310], [10, 330],
    [60, 308], [100, 355], [15, 395], [75, 400], [20, 445], [100, 448], [70, 445], [30, 485], [75, 475], [65, 385]
];

const SVG = 'http://www.w3.org/2000/svg';
const TILE_WIDTH = 597;
const tile = document.getElementById('tile');

function draw(name, x, y, rotation = 0, scale = 1) {
    const use = document.createElementNS(SVG, 'use');
    use.setAttribute('href', '#' + name);
    use.setAttribute('transform', `translate(${x} ${y}) rotate(${rotation}) scale(${scale})`);
    tile.appendChild(use);
}

doodles.forEach(([name, x, y, ...rest]) => {
    draw(name, x, y, ...rest);
    // repeat what crosses the edge of the tile on its other side
    if (x < 60) draw(name, x + TILE_WIDTH, y, ...rest);
    if (x > TILE_WIDTH - 60) draw(name, x - TILE_WIDTH, y, ...rest);
});
dots.forEach(([x, y], i) => draw(i % 4 ? 'dot' : 'ring', x, y));
```
